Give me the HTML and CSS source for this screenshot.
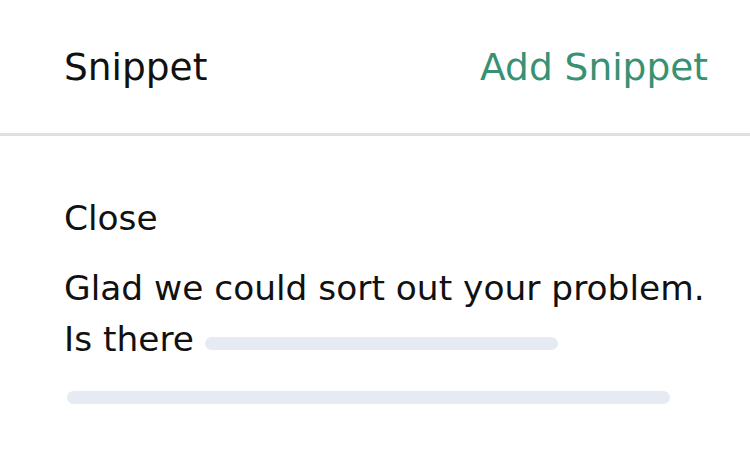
FILE: index.html
```html
<!DOCTYPE html>
<html lang="en">
<head>
    <meta charset="UTF-8">
    <meta name="viewport" content="width=device-width, initial-scale=1.0">
    <title>Snippet</title>
    <link rel="stylesheet" href="styles.css">
</head>
<body>
    <div class="panel">
        <div class="panel-header">
            <span class="panel-title">Snippet</span>
            <a class="add-link" href="#">Add Snippet</a>
        </div>
        <div class="snippet">
            <div class="snippet-name">Close</div>
            <p class="snippet-body">Glad we could sort out your problem. Is there <span class="skeleton skeleton-inline"></span></p>
            <div class="skeleton skeleton-line"></div>
        </div>
    </div>
</body>
</html>
```

FILE: styles.css
```css
body {
    margin: 0;
    background: #fff;
    font-family: "DejaVu Sans", "Liberation Sans", sans-serif;
    color: #111;
}
.panel {
    width: 750px;
}
.panel-header {
    display: flex;
    justify-content: space-between;
    align-items: center;
    height: 133px;
    padding: 0 42px 0 64px;
    border-bottom: 3px solid #e0e0e0;
    font-size: 37.5px;
}
.add-link {
    color: #379172;
    text-decoration: none;
}
.snippet {
    padding: 58px 40px 0 64px;
    font-size: 34.4px;
    line-height: 48px;
}
.snippet-body {
    margin: 21px 0 0;
    line-height: 51px;
}
.skeleton {
    background: #e6eaf3;
    border-radius: 7px;
    height: 13px;
}
.skeleton-inline {
    display: inline-block;
    width: 353px;
    vertical-align: 1px;
}
.skeleton-line {
    width: 603px;
    margin: 26px 0 0 3px;
}
```
